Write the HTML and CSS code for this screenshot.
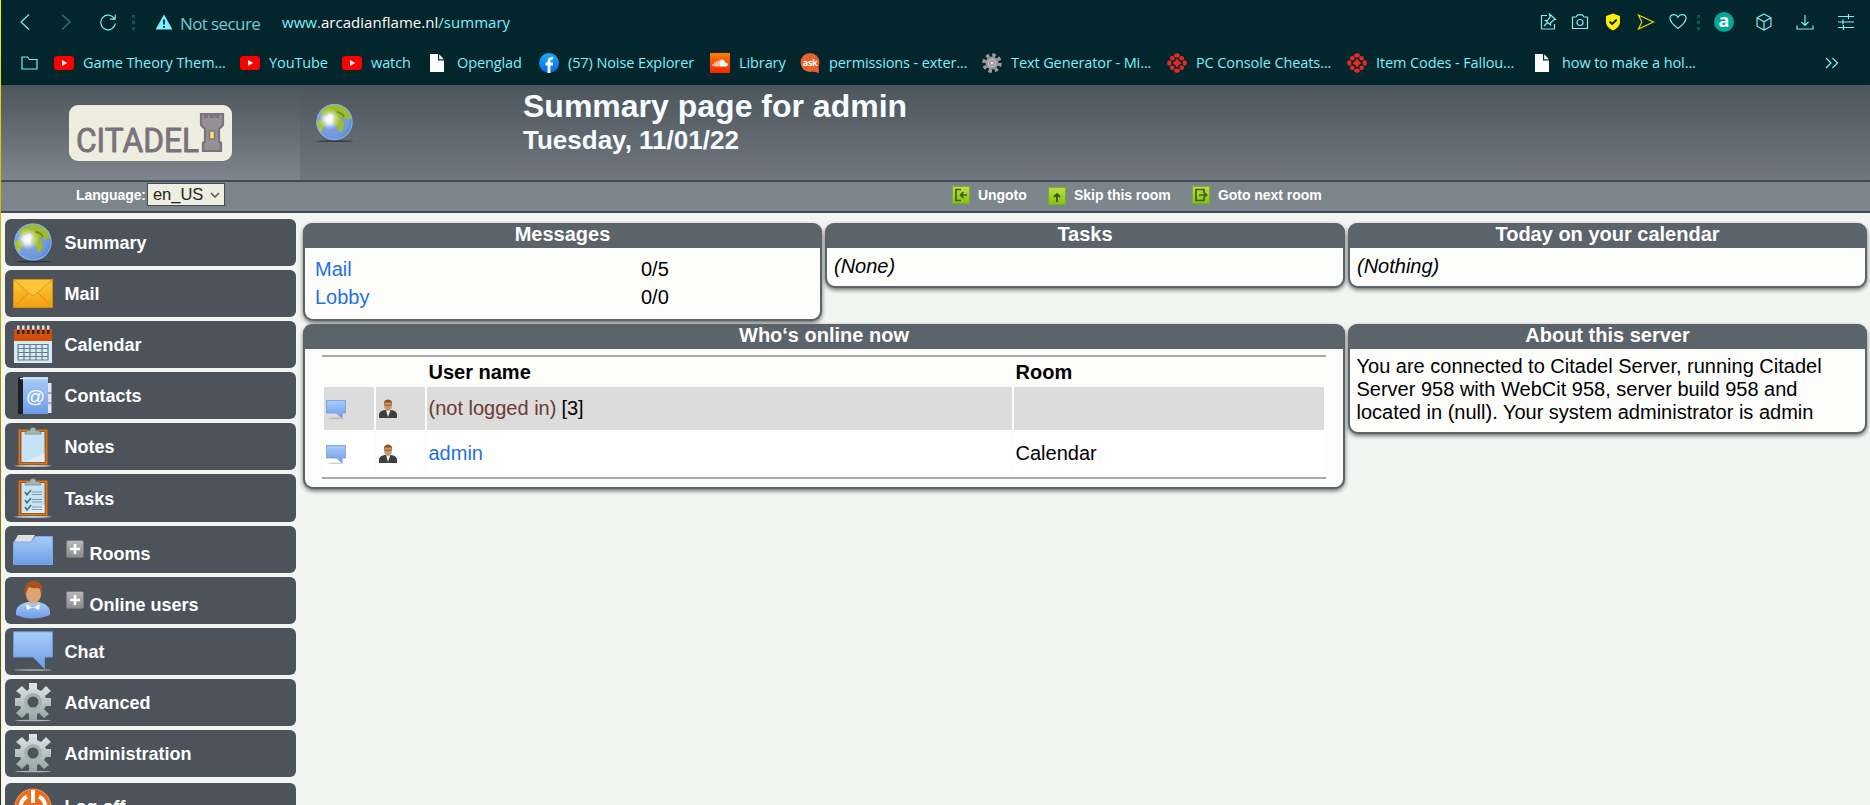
FILE: index.html
```html
<!DOCTYPE html>
<html lang="en">
<head>
<meta charset="utf-8">
<title>Summary page for admin</title>
<link rel="stylesheet" href="styles.css">
</head>
<body>
<svg class="defs" width="0" height="0" aria-hidden="true">
  <defs>
    <radialGradient id="sea" cx=".36" cy=".42" r=".65"><stop offset="0" stop-color="#fff"/><stop offset=".12" stop-color="#dfe9fa"/><stop offset=".35" stop-color="#7f9fe0"/><stop offset=".85" stop-color="#6d97dc"/><stop offset="1" stop-color="#4f7fc4"/></radialGradient>
    <radialGradient id="shine" cx=".36" cy=".42" r=".3"><stop offset="0" stop-color="#fff"/><stop offset="1" stop-color="#fff" stop-opacity="0"/></radialGradient>
    <linearGradient id="blue" x2="0" y2="1"><stop offset="0" stop-color="#a8ccfa"/><stop offset="1" stop-color="#6f9ce6"/></linearGradient>
    <linearGradient id="gold" x2="0" y2="1"><stop offset="0" stop-color="#fdc92f"/><stop offset="1" stop-color="#f3a012"/></linearGradient>
    <linearGradient id="steel" x2="0" y2="1"><stop offset="0" stop-color="#dfe8e7"/><stop offset="1" stop-color="#94a3a4"/></linearGradient>
    <linearGradient id="lime" x2="0" y2="1"><stop offset="0" stop-color="#b9e04a"/><stop offset="1" stop-color="#86c010"/></linearGradient>
    <linearGradient id="grey" x2="0" y2="1"><stop offset="0" stop-color="#b9b9bb"/><stop offset="1" stop-color="#8b8b8d"/></linearGradient>
    <linearGradient id="fb" x2="0" y2="1"><stop offset="0" stop-color="#18aefc"/><stop offset="1" stop-color="#0865e6"/></linearGradient>
    <linearGradient id="sc" x2="0" y2="1"><stop offset="0" stop-color="#ff7d00"/><stop offset="1" stop-color="#ff2300"/></linearGradient>
  </defs>
  <symbol id="globe" viewBox="0 0 40 40">
    <ellipse cx="20" cy="38.6" rx="19" ry="1" fill="#20262c" opacity=".7"/>
    <circle cx="20" cy="19" r="18.6" fill="url(#sea)"/>
    <path d="M7 6C12 1.500 19 .5 25 1.300C32 3 36.500 8 38 15L31 17C30 14 27 13 26 15C30 19 31 24 27 29C24 30 23 25 22 22C17 21 17 16 20 13C18 9 15 9 13 12L6 13Z" fill="#9dbd2c"/>
    <path d="M1.500 18L7 17L11 20L8 25L6 31C3 27 1 23 1.500 18Z" fill="#a9c332"/>
    <path d="M22 9C26 9 29 12 30 14" fill="none" stroke="#71901f" stroke-width="2"/>
    <circle cx="20" cy="19" r="18.600" fill="url(#shine)"/>
    <circle cx="20" cy="19" r="18" fill="none" stroke="#7fb0ea" stroke-width="1.200"/>
  </symbol>
  <symbol id="gear" viewBox="0 0 40 40">
    <ellipse cx="20" cy="38.500" rx="18" ry=".8" fill="#c5cccc" opacity=".8"/>
    <g fill="url(#steel)">
      <path d="M16 1H24V7L28 9L33 4L38 9L32 14L33 16H38V24H33L31 27L36 32L31 36L26 31L24 32V38H16V32L14 31L9 36L3 31L8 26L7 24H2V16H7L8 13L3 9L9 4L14 9L16 7Z"/>
    </g>
    <circle cx="20" cy="20" r="9" fill="#a5b2b2"/><circle cx="20" cy="20" r="5.500" fill="#4c535b"/>
  </symbol>
  <symbol id="board" viewBox="0 0 40 40">
    <ellipse cx="20" cy="38.800" rx="19" ry=".9" fill="#d0d4d5"/>
    <rect x="5" y="2" width="30" height="36" rx="1" fill="#a9581a"/><rect x="6.500" y="3.500" width="27" height="33" fill="none" stroke="#c67b36"/>
    <rect x="8.500" y="5" width="23" height="30" fill="#c4e3f6"/><path d="M11 35L31.500 26V35Z" fill="#dceefa"/>
    <path d="M12 7Q12 3.500 17 3.500Q17 .5 20 .5Q23 .5 23 3.500Q28 3.500 28 7Z" fill="#a9b6b0" stroke="#6f7d78" stroke-width=".7"/>
  </symbol>
  <symbol id="chat" viewBox="0 0 40 40">
    <ellipse cx="20" cy="39" rx="19" ry=".8" fill="#c5cccc" opacity=".8"/>
    <path d="M.5 .8H39.500V26H31.500V37.500L20 26H.5Z" fill="url(#blue)" stroke="#6c9ae0"/>
  </symbol>
  <symbol id="bubble" viewBox="0 0 20 20">
    <ellipse cx="10" cy="19.200" rx="8" ry=".7" fill="#8d99a8" opacity=".5"/>
    <path d="M.5 1.500H19.500V14H16V19L10.500 14H.5Z" fill="url(#blue)" stroke="#6c9ae0" stroke-width=".8"/>
  </symbol>
  <symbol id="user" viewBox="0 0 40 40">
    <path d="M3 35C2 26 9 23 15 22L26 22C32 24 38 26 37 35Q28 38.500 20 38.500Q11 38.500 3 35Z" fill="url(#blue)"/>
    <path d="M13 24L20 28L27 24L26 30L20 27L14 30Z" fill="#fff"/>
    <ellipse cx="20.500" cy="14" rx="7.500" ry="9.500" fill="#dca571"/>
    <path d="M12.500 18C10 6 13 1 21 1C29 1 31 7 28.500 17Q29 11 26 8Q20 9 16 7Q13 11 12.500 18Z" fill="#a9541f"/>
  </symbol>
  <symbol id="suit" viewBox="0 0 20 20">
    <path d="M1 19V15Q2 11.500 7 11H13Q18 11.500 19 15V19Z" fill="#3a3f42"/><path d="M8 11L10 18L12.500 11Z" fill="#eef1f1"/>
    <ellipse cx="10" cy="6.500" rx="3.900" ry="5.400" fill="#cf9663"/><path d="M6 7Q5 .5 10 .5Q15 .5 14 7L13 3.500H7Z" fill="#8d4a1a"/><path d="M7 6.200H13" stroke="#5b4a3b" stroke-width=".8"/>
  </symbol>
  <symbol id="plus" viewBox="0 0 18 18"><rect x=".5" y=".5" width="17" height="17" rx="1.500" fill="url(#grey)" stroke="#76787c"/><path d="M9 4V14M4 9H14" stroke="#fff" stroke-width="2.600"/></symbol>
  <symbol id="yt" viewBox="0 0 20 14"><rect width="20" height="14" rx="3.200" fill="#f00"/><path d="M8 4V10L13.200 7Z" fill="#fff"/></symbol>
  <symbol id="doc" viewBox="0 0 14 18"><path d="M0 0H8V6.500H14V18H0Z" fill="#fff"/><path d="M9.200 .3L13.800 5.300H9.200Z" fill="#fff"/></symbol>
  <symbol id="ign" viewBox="0 0 20 20"><g fill="#e32b25"><ellipse cx="10" cy="2.400" rx="2.800" ry="2.200"/><ellipse cx="10" cy="17.600" rx="2.800" ry="2.200"/><ellipse cx="2.300" cy="10" rx="2.100" ry="2.800"/><ellipse cx="17.700" cy="10" rx="2.100" ry="2.800"/><circle cx="5.300" cy="5.300" r="2.300"/><circle cx="14.700" cy="5.300" r="2.300"/><circle cx="5.300" cy="14.700" r="2.300"/><circle cx="14.700" cy="14.700" r="2.300"/><path d="M10 5.500L12 8L14.500 10L12 12L10 14.500L8 12L5.500 10L8 8Z"/></g></symbol>
  <symbol id="cog" viewBox="0 0 20 20"><circle cx="10" cy="10" r="8" fill="none" stroke="#9b9b9b" stroke-width="3.600" stroke-dasharray="3.400 2.883"/><circle cx="10" cy="10" r="6.500" fill="#969696"/><circle cx="10" cy="10" r="3.800" fill="none" stroke="#c6c6c6"/><circle cx="10" cy="10" r="1.500" fill="#ddd"/></symbol>
</svg>

<header class="browser">
  <div class="toolbar">
    <svg class="ico back" viewBox="0 0 18 18"><path d="M13 1.500L5 9L13 16.500"/></svg>
    <svg class="ico forward" viewBox="0 0 18 18"><path d="M5 1.500L13 9L5 16.500"/></svg>
    <svg class="ico reload" viewBox="0 0 18 18"><path d="M15.500 6A7.300 7.300 0 1 0 16.300 10.500M16.200 1.500V6.200H11"/></svg>
    <span class="dots dots-left"></span>
    <svg class="ico warn" viewBox="0 0 18 16"><path d="M9 .5L17.500 15.500H.5Z" fill="#7df0ff" stroke="none"/><path d="M9 5.500V10.500M9 12V13.800" stroke="#02262b" stroke-width="1.800"/></svg>
    <span class="secure">Not secure</span>
    <span class="url">www.<b>arcadianflame.nl</b>/summary</span>
    <div class="tools">
      <svg class="ico" viewBox="0 0 18 18"><path d="M8 2.500H2.500V16H15.500V11M5 13L8.500 9.500M10.500 1L16.500 6.500L14.500 7L11.500 10V12L6.500 7.500H8.500L11 4Z"/></svg>
      <svg class="ico" viewBox="0 0 18 18"><path d="M1.500 4H5L6.500 1.800H11.500L13 4H16.500V15.500H1.500Z"/><circle cx="9" cy="9.500" r="3"/></svg>
      <svg class="ico" viewBox="0 0 18 18"><path d="M9 .5L16 3V10Q15 15 9 17.500Q3 15 2 10V3Z" fill="#ffee00" stroke="none"/><path d="M5.500 8.500L8.200 11L12.800 6.500" stroke="#02262b" stroke-width="1.800"/></svg>
      <svg class="ico yellow" viewBox="0 0 18 18"><path d="M1.500 2L16.500 9L1.500 16L4.800 9Z"/></svg>
      <svg class="ico" viewBox="0 0 18 18"><path d="M9 15.500C3 11 1 8 1 5.300C1 1 7 .2 9 4.200C11 .2 17 1 17 5.300C17 8 15 11 9 15.500Z"/></svg>
      <span class="dots"></span>
      <span class="avatar">a</span>
      <svg class="ico" viewBox="0 0 18 18"><path d="M9 1L16 4.800V13.200L9 17L2 13.200V4.800ZM2 4.800L9 8.800L16 4.800M9 8.800V17"/></svg>
      <svg class="ico" viewBox="0 0 18 18"><path d="M9 2V12.500M5.500 9L9 12.500L12.500 9M1 12.500V16H17V12.500"/></svg>
      <svg class="ico" viewBox="0 0 18 18"><path d="M1 3.500H17M1 9H17M1 14.500H17M11.500 1V6M6 6.500V11.500M6.500 12V17"/></svg>
    </div>
  </div>
  <nav class="bookmarks">
    <svg class="ico folder" viewBox="0 0 17 14"><path d="M1 1H6.500L8.500 3.500H16V13H1Z"/></svg>
    <a><svg class="fav short"><use href="#yt"/></svg>Game Theory Them...</a>
    <a><svg class="fav short"><use href="#yt"/></svg>YouTube</a>
    <a><svg class="fav short"><use href="#yt"/></svg>watch</a>
    <a><svg class="fav page"><use href="#doc"/></svg>Openglad</a>
    <a><svg class="fav" viewBox="0 0 20 20"><circle cx="10" cy="10" r="10" fill="url(#fb)"/><path d="M10 20V8Q10 5 14 5.400M6.500 11H14" fill="none" stroke="#fff" stroke-width="2.800"/></svg>(57) Noise Explorer</a>
    <a><svg class="fav" viewBox="0 0 20 20"><rect width="20" height="20" fill="url(#sc)"/><path d="M10 13.500V7Q14 5.500 15 9.500Q18 9.500 18 11.500Q18 13.500 16 13.500Z" fill="#fff"/><path d="M3 11V13M5 9.500V13.500M7 8.500V13.500M9 7.500V13.500" stroke="#ffd9c2" stroke-width="1.600"/></svg>Library</a>
    <a><svg class="fav" viewBox="0 0 20 20"><circle cx="10" cy="9.500" r="9.500" fill="#e8622c"/><path d="M11 18L19 20L18.500 12Z" fill="#e8622c"/><text x="10" y="13" class="ask">ask</text></svg>permissions - exter...</a>
    <a><svg class="fav"><use href="#cog"/></svg>Text Generator - Mi...</a>
    <a><svg class="fav"><use href="#ign"/></svg>PC Console Cheats...</a>
    <a><svg class="fav"><use href="#ign"/></svg>Item Codes - Fallou...</a>
    <a><svg class="fav page"><use href="#doc"/></svg>how to make a hol...</a>
    <svg class="ico more" viewBox="0 0 14 12"><path d="M1 1L6 6L1 11M7.500 1L12.500 6L7.500 11"/></svg>
  </nav>
</header>

<div class="banner">
  <div class="brand">
    <svg class="logo" viewBox="0 0 163 56">
      <rect width="163" height="56" rx="9" fill="#edeee0"/>
      <text x="7" y="47" class="logo-text" textLength="123" lengthAdjust="spacingAndGlyphs">CITADEL</text>
      <path d="M132 9H136V12H138V9H142V12H144V9H147V12H149V9H154V20L150 24V36L152 38V46H134V38L136 36V24L132 20Z" fill="#978f98" stroke="#7b737c" stroke-width="2.200"/>
      <rect x="140.500" y="26" width="5" height="8" fill="#fbe26a" stroke="#7b737c" stroke-width="1.400"/>
    </svg>
  </div>
  <div class="headline">
    <svg class="headline-icon"><use href="#globe"/></svg>
    <div>
      <h1>Summary page for admin</h1>
      <h2>Tuesday, 11/01/22</h2>
    </div>
  </div>
</div>

<div class="navbar">
  <label class="language"><span class="label">Language:</span><span class="select">en_US<svg viewBox="0 0 10 6"><path d="M1 1L5 5L9 1" fill="none" stroke="#555" stroke-width="1.500"/></svg></span></label>
  <div class="actions">
    <a><svg viewBox="0 0 18 18"><rect x=".5" y=".5" width="17" height="17" fill="url(#lime)" stroke="#7fae1c"/><path d="M9 3.500H4V14.500H9M15 9H9M11.500 6L8.500 9L11.500 12" fill="none" stroke="#3f5a16" stroke-width="1.700"/></svg>Ungoto</a>
    <a><svg class="low" viewBox="0 0 18 18"><rect x=".5" y=".5" width="17" height="17" fill="url(#lime)" stroke="#7fae1c"/><path d="M9 15V7M6 10L9 7L12 10" fill="none" stroke="#3f5a16" stroke-width="1.900"/></svg>Skip this room</a>
    <a><svg viewBox="0 0 18 18"><rect x=".5" y=".5" width="17" height="17" fill="url(#lime)" stroke="#7fae1c"/><path d="M12 6V3.500H4V14.500H12V12M7 9H14M11.500 6L14.500 9L11.500 12" fill="none" stroke="#3f5a16" stroke-width="1.700"/></svg>Goto next room</a>
  </div>
</div>

<div class="page">
  <nav class="sidebar">
    <a><svg><use href="#globe"/></svg><span>Summary</span></a>
    <a><svg viewBox="0 0 40 40"><rect x=".5" y="5.500" width="39" height="28" fill="url(#gold)" stroke="#d78a14"/><path d="M1 33L15 19M39 33L25 19" stroke="#e08f10"/><path d="M1 6L17 20Q20 23 23 20L39 6" fill="#fdc53a" stroke="#e2951a"/></svg><span>Mail</span></a>
    <a><svg viewBox="0 0 40 40"><rect x="1" y="5" width="38" height="33" fill="#d5ebf7"/><rect x="1" y="4" width="38" height="12" fill="#d34e06"/><path d="M4 2.500H37" stroke="#ddd" stroke-width="4" stroke-dasharray="2.500 2.500"/><path d="M4 7H37" stroke="#33251f" stroke-width="4" stroke-dasharray="2.500 2.500"/><path d="M4.500 19.500H35.500M4.500 23.500H35.500M4.500 27.500H35.500M4.500 31.500H35.500M4.500 35H35.500M5 19V35M11 19V35M17 19V35M23 19V35M29 19V35M35 19V35" stroke="#6b7a83" stroke-width="1.200"/></svg><span>Calendar</span></a>
    <a><svg viewBox="0 0 40 40"><rect x="33" y="7" width="5.500" height="30" fill="#e2e5e8"/><path d="M33 17H39M33 27H39" stroke="#6b6f75"/><rect x="5" y="1" width="6" height="37" fill="#1d1f22"/><rect x="10" y="1" width="25" height="37" fill="url(#blue)"/><path d="M7 2.500H35" stroke="#d9e8fb" stroke-width="1.500"/><text x="22.500" y="27" class="at">@</text></svg><span>Contacts</span></a>
    <a><svg><use href="#board"/></svg><span>Notes</span></a>
    <a><svg viewBox="0 0 40 40"><use href="#board"/><path d="M12 14L14 17L18 12M12 22L14 25L18 20M12 29L14 32L18 27" fill="none" stroke="#4c6b66" stroke-width="1.500"/><path d="M19 14H29M19 16.500H29M19 21.500H29M19 24H29M19 29H29M19 31.500H29" stroke="#8698a3" stroke-width="1.100"/></svg><span>Tasks</span></a>
    <a class="tree"><svg viewBox="0 0 40 40"><path d="M1 13L5 6H22L18 13Z" fill="#e1e0e0"/><path d="M.5 13H18L22.500 7.500H39.500V35.500H.5Z" fill="url(#blue)" stroke="#7aa6e8"/></svg><svg class="plus"><use href="#plus"/></svg><span>Rooms</span></a>
    <a class="tree"><svg><use href="#user"/></svg><svg class="plus"><use href="#plus"/></svg><span>Online users</span></a>
    <a><svg><use href="#chat"/></svg><span>Chat</span></a>
    <a><svg><use href="#gear"/></svg><span>Advanced</span></a>
    <a><svg><use href="#gear"/></svg><span>Administration</span></a>
    <a class="logoff"><svg viewBox="0 0 40 40"><circle cx="20" cy="20" r="18" fill="#ee6c17" stroke="#f49a5c"/><path d="M14 9.500A12.500 12.500 0 1 0 26 9.500" fill="none" stroke="#fff" stroke-width="4"/><path d="M20 3V16" stroke="#fff" stroke-width="4"/></svg><span>Log off</span></a>
  </nav>

  <main class="grid">
    <section class="card">
      <h3>Messages</h3>
      <div class="body messages">
        <a>Mail</a><span>0/5</span>
        <a>Lobby</a><span>0/0</span>
      </div>
    </section>
    <section class="card">
      <h3>Tasks</h3>
      <div class="body"><i>(None)</i></div>
    </section>
    <section class="card">
      <h3>Today on your calendar</h3>
      <div class="body"><i>(Nothing)</i></div>
    </section>
    <section class="card wide">
      <h3>Who‘s online now</h3>
      <div class="online">
        <div class="row head"><span></span><span></span><span>User name</span><span>Room</span></div>
        <div class="row shaded">
          <span><svg><use href="#bubble"/></svg></span><span><svg><use href="#suit"/></svg></span>
          <span><a class="guest">(not logged in)</a> [3]</span><span></span>
        </div>
        <div class="row plain">
          <span><svg><use href="#bubble"/></svg></span><span><svg><use href="#suit"/></svg></span>
          <span><a>admin</a></span><span>Calendar</span>
        </div>
      </div>
    </section>
    <section class="card">
      <h3>About this server</h3>
      <div class="body about">You are connected to Citadel Server, running Citadel Server 958 with WebCit 958, server build 958 and located in (null). Your system administrator is admin</div>
    </section>
  </main>
</div>
</body>
</html>
```

FILE: styles.css
```css
* { box-sizing: border-box; }

body {
  margin: 0;
  height: 805px;
  overflow: hidden;
  background: #f3f5f3;
  font-family: "Liberation Sans", Arial, sans-serif;
  font-size: 20px;
  color: #000;
  position: relative;
}

/* Accent line along the left window edge */
body::before {
  content: "";
  position: absolute;
  left: 0;
  top: 0;
  width: 1px;
  height: 805px;
  z-index: 2;
  background: linear-gradient(#ffee00, #e0d000 15%, #b9ad08 35%, #6b640c 75%, #34320e);
}

.defs { position: absolute; }
h1, h2, h3 { margin: 0; }
svg { flex: none; display: block; }

/* Browser chrome */
.browser {
  height: 85px;
  background: #02262b;
  color: #7df0ff;
  font-family: "Open Sans", "Noto Sans", sans-serif;
}
.toolbar { display: flex; align-items: center; height: 44px; padding-left: 16px; }
.ico { width: 18px; height: 18px; fill: none; stroke: #7df0ff; stroke-width: 1.2; }
.forward { margin-left: 23px; opacity: .4; }
.reload { margin-left: 24px; }
.dots { width: 3px; height: 15px; background: repeating-linear-gradient(#0a5660 0 3px, transparent 3px 6px); }
.dots-left { margin-left: 15px; }
.warn { height: 16px; margin-left: 20px; }
.secure { margin-left: 7px; margin-top: 2px; font-size: 17px; letter-spacing: -.6px; color: #74c9d3; width: 102px; white-space: nowrap; }
.url { font-size: 15px; letter-spacing: .03px; }
.url b { font-weight: 400; color: #fff; }
.tools {
  margin-left: auto;
  margin-right: 15px;
  display: grid;
  grid-template-columns: 32px 33px 33px 32px 28px 17px 41px 41px 41px 18px;
  align-items: center;
}
.yellow { stroke: #e8dc00; }
.avatar {
  width: 20px; height: 20px; border-radius: 50%;
  background: #00a99a; color: #fff;
  font-size: 18px; font-weight: 700; line-height: 16px; text-align: center;
}

.bookmarks {
  display: grid;
  grid-template-columns: 33px 186px 102px 87px 110px 171px 90px 182px 185px 180px 187px 291px 14px;
  align-items: center;
  height: 37px;
  padding-left: 21px;
  font-size: 14.5px;
  letter-spacing: -.1px;
}
.bookmarks a { display: flex; align-items: center; gap: 9px; white-space: nowrap; }
.folder { width: 17px; height: 14px; }
.more { width: 14px; height: 12px; }
.fav { width: 20px; height: 20px; }
.short { height: 14px; }
.page.fav { width: 14px; height: 18px; margin: 0 4px 0 1px; }
.ask { font: 700 9px "Open Sans", sans-serif; fill: #fff; text-anchor: middle; letter-spacing: -.4px; }

/* Site banner */
.banner { display: flex; height: 95px; background: linear-gradient(#4d555d, #70777f); }
.brand { width: 300px; padding: 20px 0 0 69px; background: linear-gradient(#4d555d, #7e858c); }
.logo { width: 163px; height: 56px; }
.logo-text { font: 400 33px Roboto, sans-serif; fill: #7b737c; stroke: #7b737c; stroke-width: .9; stroke-linejoin: round; }
.headline { display: flex; padding: 18px 0 0 15px; color: #f6fdff; }
.headline-icon { width: 39px; height: 40px; margin-right: 169px; }
.headline > div { margin-top: -14px; }
h1 { font-size: 32px; line-height: 34px; }
h2 { font-size: 26px; line-height: 32px; margin-top: 1px; }

.navbar {
  display: flex;
  height: 33px;
  border: solid #434a53;
  border-width: 2px 0;
  background: #7d858c;
  color: #fff;
  font-size: 14px;
  font-weight: 700;
}
.language { display: flex; align-items: center; width: 952px; padding-left: 76px; letter-spacing: -.1px; }
.label { padding-bottom: 3px; }
.select {
  display: flex; align-items: center; justify-content: space-between;
  width: 78px; height: 23px; padding: 0 4px 0 5px; margin: -4px 0 0 1px;
  background: #edeee0; border: 1px solid #434a53;
  color: #222; font-size: 16.5px; font-weight: 400; letter-spacing: 0;
}
.select svg { width: 10px; height: 6px; }
.actions { display: grid; grid-template-columns: 96px 144px 140px; align-items: center; height: 25px; }
.actions a { display: flex; align-items: center; gap: 8px; white-space: nowrap; letter-spacing: -.04px; }
.actions svg { width: 18px; height: 18px; }
.actions .low { margin-bottom: -2px; }

/* Main area */
div.page { display: flex; align-items: flex-start; }
.sidebar { width: 291px; margin: 6px 0 0 5px; display: flex; flex-direction: column; gap: 4px; }
.sidebar a {
  display: flex; align-items: center;
  height: 47.1px; padding-left: 8px;
  border-radius: 6px; background: #4c535b; color: #fff;
  font-size: 18px; font-weight: 700;
}
.sidebar svg { width: 40px; height: 40px; margin-right: 11.5px; }
.sidebar span { padding-top: 2px; }
.sidebar .plus { width: 18px; height: 18px; margin: 0 5.5px 0 1.5px; }
.sidebar .tree span { padding-top: 11px; }
.sidebar .logoff { margin-top: 2px; }
.at { font: 400 19px "Liberation Sans", Arial, sans-serif; fill: #fff; text-anchor: middle; }

.grid {
  display: grid;
  grid-template-columns: 519px 520px 519px;
  gap: 3px;
  margin: 10px 0 0 7px;
  align-items: start;
}
.card {
  border: 2px solid #5b636b;
  border-top: 0;
  border-radius: 10px;
  background: #fdfefc;
  box-shadow: 0 2px 4px rgba(0, 0, 0, .55);
}
.card h3 {
  height: 25px;
  margin: 0 -2px;
  border-radius: 9px 9px 0 0;
  background: #5b636b;
  color: #fff;
  font-size: 20px;
  line-height: 22px;
  text-align: center;
}
.wide { grid-column: span 2; width: 1042px; }
.body { padding: 7px 7px 8px; line-height: 23px; }
.card a { color: #1f6fe5; }
.messages { display: grid; grid-template-columns: 326px 1fr; align-content: start; line-height: 28px; padding: 7px 10px; height: 71px; }
.about { padding: 6px 6px 8px 6.5px; }

.online { margin: 6px 17px 8px; padding: 0 2px; border: solid #a9a9a9; border-width: 2px 0; height: 124px; }
.row { display: grid; grid-template-columns: 50px 49px 585px 310px; gap: 2px; align-items: center; }
.head { height: 30px; font-weight: 700; }
.row > span { display: flex; align-items: center; padding-left: 1.5px; gap: 5px; height: 100%; }
.row svg { width: 20px; height: 20px; }
.shaded { height: 43px; }
.shaded > span { background: #dcdcdc; }
.plain { height: 43px; margin-top: 2px; }
.plain > span { background: #fff; }
.card .guest { color: #6b3a33; }
```
